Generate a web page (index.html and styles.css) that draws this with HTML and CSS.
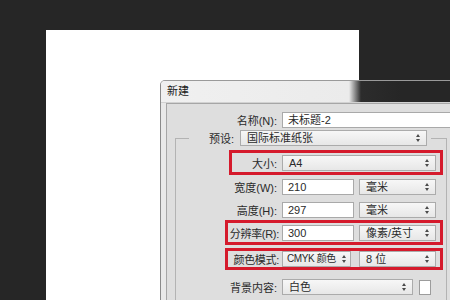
FILE: index.html
```html
<!DOCTYPE html>
<html lang="zh-CN">
<head>
    <meta charset="UTF-8">
    <title>新建</title>
    <link rel="stylesheet" href="styles.css">
</head>
<body>
    <div class="workspace">
        <!-- Document canvas -->
        <div class="page"></div>

        <!-- New document dialog -->
        <div class="dialog">
            <div class="title-bar">新建</div>
            <div class="dialog-body">
                <div class="panel">
                    <div class="row row-name">
                        <span class="label label-name">名称(N):</span>
                        <div class="input input-name">未标题-2</div>
                    </div>

                    <fieldset class="group">
                        <legend class="preset">
                            <span class="label label-preset">预设:</span>
                            <div class="select select-preset">国际标准纸张</div>
                        </legend>

                        <div class="row row-size mark mark-wide">
                            <span class="label label-size">大小:</span>
                            <div class="select select-size">A4</div>
                        </div>

                        <div class="row row-width">
                            <span class="label">宽度(W):</span>
                            <div class="input input-num">210</div>
                            <div class="select select-unit">毫米</div>
                        </div>

                        <div class="row row-height">
                            <span class="label">高度(H):</span>
                            <div class="input input-num">297</div>
                            <div class="select select-unit">毫米</div>
                        </div>

                        <div class="row row-res mark">
                            <span class="label label-mark">分辨率(R):</span>
                            <div class="input input-num">300</div>
                            <div class="select select-unit">像素/英寸</div>
                        </div>

                        <div class="row row-mode mark">
                            <span class="label label-mark">颜色模式:</span>
                            <div class="select select-mode">CMYK 颜色</div>
                            <div class="select select-unit select-bits">8 位</div>
                        </div>

                        <div class="row row-bg">
                            <span class="label">背景内容:</span>
                            <div class="select select-bg">白色</div>
                            <div class="swatch"></div>
                        </div>
                    </fieldset>
                </div>
            </div>
        </div>
    </div>
</body>
</html>
```

FILE: styles.css
```css
* {
    margin: 0;
    padding: 0;
    box-sizing: border-box;
}

body {
    background: #262626;
    width: 450px;
    height: 300px;
    overflow: hidden;
    font-family: 'Liberation Sans', 'Noto Sans CJK SC', sans-serif;
    font-size: 11px;
    color: #2a2a2a;
}

.workspace {
    position: relative;
    width: 450px;
    height: 300px;
    padding: 30px 0 0 46px;
}

.page {
    width: 313px;
    height: 280px;
    background: #ffffff;
}

/* Dialog window */
.dialog {
    position: absolute;
    left: 160px;
    top: 80px;
    width: 300px;
    height: 230px;
    border-left: 1px solid #8a8a8a;
    border-top: 1px solid #9a9a9a;
    border-top-left-radius: 5px;
    overflow: hidden;
}

.title-bar {
    height: 21px;
    line-height: 21px;
    padding-left: 6px;
    color: #1a1a1a;
    background: linear-gradient(to right, #f0f0f0 0, #ebebeb 188px, #2c2c2c 200px, #262626 240px);
}

.dialog-body {
    height: 210px;
    padding-left: 5px;
    background: #e9e9e9;
    border-top: 1px solid #d2d2d2;
}

.panel {
    height: 100%;
    background: #dedede;
    border-left: 1px solid #a6a6a6;
    border-top: 1px solid #a6a6a6;
}

/* Rows */
.row {
    display: flex;
    align-items: center;
    height: 16px;
}

.label {
    width: 106px;
    padding-right: 5px;
    text-align: right;
    white-space: nowrap;
    flex-shrink: 0;
}

.row-name {
    margin-top: 8px;
}

.label-name {
    width: 115px;
}

.group {
    width: 272px;
    margin: 2px 0 0 8px;
    padding: 0 0 8px 0;
    border: 1px solid #b3b3b3;
    min-width: 0;
}

.preset {
    display: flex;
    align-items: center;
    margin-left: 13px;
    padding-right: 4px;
}

.label-preset {
    width: 45px;
    padding-right: 0;
    margin-right: 6px;
}

/* Highlighted rows */
.mark {
    border: 3px solid #d51a2c;
    margin-left: 49px;
    width: 218px;
    padding-right: 4px;
}

.mark-wide {
    margin-left: 53px;
    width: 214px;
}

.label-size {
    width: 50px;
}

.label-mark {
    width: 54px;
    padding-right: 3px;
    letter-spacing: -0.3px;
}

.row-size {
    height: 25px;
    margin-top: 4px;
}

.row-width {
    margin-top: 4px;
}

.row-height {
    margin-top: 7px;
}

.row-res {
    height: 25px;
    margin-top: 2px;
}

.row-mode {
    height: 22px;
    margin-top: 3px;
}

.row-bg {
    margin-top: 9px;
}

/* Fields */
.input,
.select {
    height: 16px;
    line-height: 14px;
    padding-left: 5px;
    border: 1px solid #a9a9a9;
    white-space: nowrap;
    flex-shrink: 0;
}

.input {
    background: #ffffff;
}

.input-name {
    width: 200px;
}

.input-num {
    width: 72px;
}

.select {
    position: relative;
    padding-left: 6px;
    background: linear-gradient(#f7f7f7, #e7e7e7);
    border-color: #ababab;
}

.select::before,
.select::after {
    content: "";
    position: absolute;
    right: 6px;
    border-left: 2px solid transparent;
    border-right: 2px solid transparent;
}

.select::before {
    top: 3px;
    border-bottom: 3px solid #4a4a4a;
}

.select::after {
    top: 8px;
    border-top: 3px solid #4a4a4a;
}

.select-preset {
    width: 187px;
}

.select-size {
    width: 154px;
}

.select-unit {
    width: 77px;
    margin-left: 5px;
}

.select-mode {
    width: 69px;
    padding-left: 4px;
    font-size: 10px;
    letter-spacing: -0.4px;
}

.select-mode::before,
.select-mode::after {
    right: 4px;
}

.select-bits {
    margin-left: 8px;
}

.select-bg {
    width: 131px;
}

.swatch {
    width: 12px;
    height: 15px;
    margin-left: 6px;
    background: #ffffff;
    border: 1px solid #9c9c9c;
}
```
